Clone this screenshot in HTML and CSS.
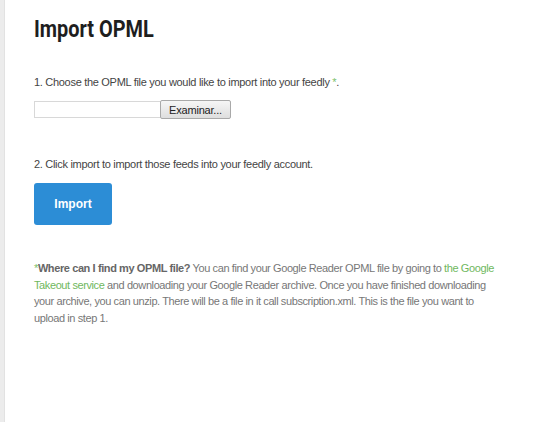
FILE: index.html
```html
<!DOCTYPE html>
<html lang="en">
<head>
    <meta charset="UTF-8">
    <title>Import OPML</title>
    <link rel="stylesheet" href="styles.css">
</head>
<body>
    <div class="side"></div>
    <div class="page">
        <h1>Import OPML</h1>

        <p class="step">1. Choose the OPML file you would like to import into your feedly <span class="star">*</span>.</p>
        <div class="file-row">
            <input type="text" class="file-name">
            <button type="button" class="browse">Examinar...</button>
        </div>

        <p class="step step-two">2. Click import to import those feeds into your feedly account.</p>
        <button type="button" class="import">Import</button>

        <p class="help"><span class="star">*</span><b>Where can I find my OPML file?</b> You can find your Google Reader OPML file by going to <a href="#">the Google Takeout service</a> and downloading your Google Reader archive. Once you have finished downloading your archive, you can unzip. There will be a file in it call subscription.xml. This is the file you want to upload in step 1.</p>
    </div>
</body>
</html>
```

FILE: styles.css
```css
body {
    margin: 0;
    font-family: "Liberation Sans", Arial, sans-serif;
    background: #fff;
    display: flex;
    min-height: 422px;
}
.side {
    width: 4px;
    background: #ececec;
    border-right: 1px solid #e2e2e2;
}
.page {
    padding: 14px 0 0 29px;
    width: 462px;
}
h1 {
    display: inline-block;
    margin: 0;
    font-family: Roboto, "DejaVu Sans", sans-serif;
    font-size: 24px;
    font-weight: bold;
    color: #1e1e1e;
    line-height: 30px;
    transform: scaleX(0.83);
    transform-origin: left center;
}
.step {
    margin: 31px 0 0;
    font-size: 11px;
    letter-spacing: -0.3px;
    color: #444;
    line-height: 14px;
}
.step-two {
    margin-top: 38px;
}
.star {
    color: #7cc16a;
}
.file-row {
    display: flex;
    margin-top: 11px;
    height: 19px;
}
.file-name {
    width: 126px;
    height: 17px;
    box-sizing: border-box;
    margin: 1px 0 0;
    padding: 0;
    border: 1px solid #d8d8d8;
    border-right: none;
}
.browse {
    width: 71px;
    height: 19px;
    padding: 0;
    font-family: "Liberation Sans", Arial, sans-serif;
    font-size: 11px;
    letter-spacing: -0.2px;
    color: #222;
    border: 1px solid #a9a9a9;
    border-radius: 2px;
    background: linear-gradient(#f6f6f6, #dedede);
}
.import {
    display: block;
    margin-top: 12px;
    width: 78px;
    height: 42px;
    border: none;
    border-radius: 3px;
    background: #2c8dd6;
    color: #fff;
    font-family: "Liberation Sans", Arial, sans-serif;
    font-size: 12px;
    font-weight: bold;
}
.help {
    margin: 35px 0 0;
    font-size: 11px;
    letter-spacing: -0.4px;
    line-height: 16.5px;
    color: #777;
}
.help b {
    color: #666;
}
.help a {
    color: #6fb85e;
    text-decoration: none;
}
```
